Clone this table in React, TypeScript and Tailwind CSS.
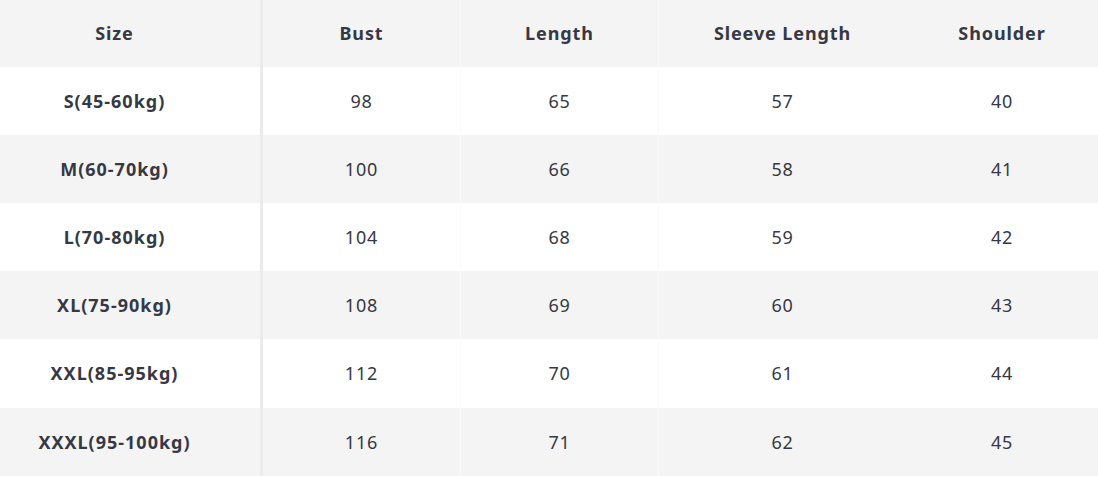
const headers = ["Size", "Bust", "Length", "Sleeve Length", "Shoulder"];

const rows = [
  ["S(45-60kg)", "98", "65", "57", "40"],
  ["M(60-70kg)", "100", "66", "58", "41"],
  ["L(70-80kg)", "104", "68", "59", "42"],
  ["XL(75-90kg)", "108", "69", "60", "43"],
  ["XXL(85-95kg)", "112", "70", "61", "44"],
  ["XXXL(95-100kg)", "116", "71", "62", "45"],
];

const cols = "grid grid-cols-[263px_198px_198px_247px_1fr]";

export default function App() {
  return (
    <div
      className="w-[1098px] h-[478px] bg-white text-[#363944] text-[18px]"
      style={{ fontFamily: "'Noto Sans', Lato, sans-serif" }}
    >
      {/* header */}
      <div className={`${cols} h-[67px] bg-[#f4f4f4] font-bold tracking-[0.9px]`}>
        {headers.map((h, i) => (
          <div
            key={h}
            className={
              i === 0
                ? "flex items-center justify-center pr-[31px] border-r-[3px] border-[#ebebeb]"
                : i < 3
                ? "flex items-center justify-center border-r border-[#f9f9f9]"
                : "flex items-center justify-center"
            }
          >
            {h}
          </div>
        ))}
      </div>

      {/* body */}
      {rows.map((r, ri) => (
        <div
          key={r[0]}
          className={`${cols} ${ri === 4 ? "h-[69px]" : "h-[68px]"} ${
            ri % 2 === 1 ? "bg-[#f4f4f4]" : "bg-white"
          }`}
        >
          {r.map((c, i) => (
            <div
              key={i}
              className={
                i === 0
                  ? "flex items-center justify-center pr-[31px] font-bold tracking-[1px] border-r-[3px] border-[#ebebeb]"
                  : i < 3
                  ? "flex items-center justify-center tracking-[0.8px] border-r border-[#fafafa]"
                  : "flex items-center justify-center tracking-[0.8px]"
              }
            >
              {c}
            </div>
          ))}
        </div>
      ))}
    </div>
  );
}
